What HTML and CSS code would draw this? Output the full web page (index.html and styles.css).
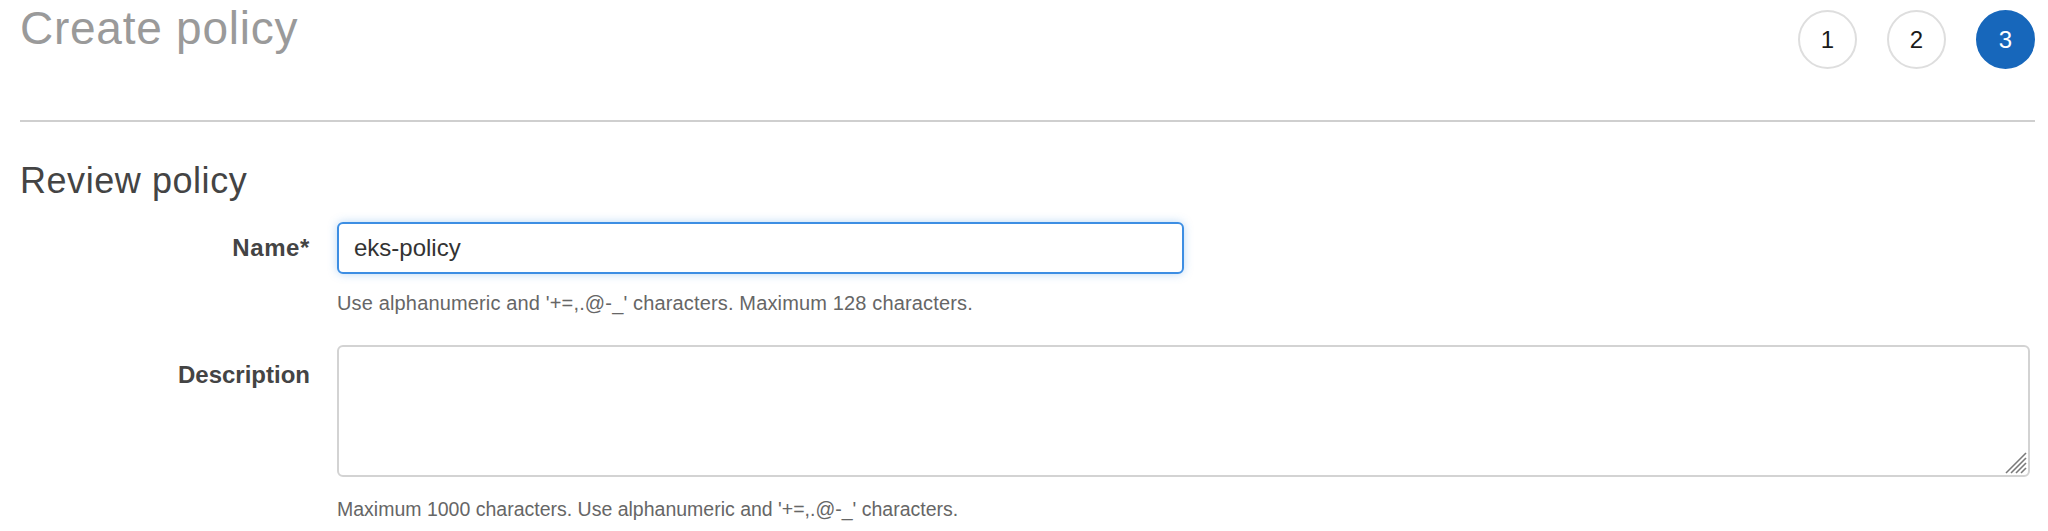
FILE: index.html
```html
<!DOCTYPE html>
<html lang="en">
<head>
<meta charset="utf-8">
<title>Create policy</title>
<link rel="stylesheet" href="styles.css">
</head>
<body>
<div class="page">
  <header class="header">
    <h1 class="title">Create policy</h1>
    <ol class="steps">
      <li class="step">1</li>
      <li class="step">2</li>
      <li class="step step-active">3</li>
    </ol>
  </header>

  <h2 class="section-title">Review policy</h2>

  <div class="form-row">
    <label class="label label-name" for="name">Name*</label>
    <div class="field">
      <input id="name" class="input input-focused" type="text" value="eks-policy">
      <div class="hint">Use alphanumeric and '+=,.@-_' characters. Maximum 128 characters.</div>
    </div>
  </div>

  <div class="form-row form-row-desc">
    <label class="label label-desc" for="desc">Description</label>
    <div class="field field-wide">
      <div class="textarea-wrap">
        <textarea id="desc" class="textarea"></textarea>
        <svg class="grip" width="22" height="22" viewBox="0 0 22 22" aria-hidden="true">
          <line x1="1" y1="21" x2="21" y2="1"/>
          <line x1="6" y1="21" x2="21" y2="6"/>
          <line x1="11" y1="21" x2="21" y2="11"/>
          <line x1="16" y1="21" x2="21" y2="16"/>
        </svg>
      </div>
      <div class="hint hint-desc">Maximum 1000 characters. Use alphanumeric and '+=,.@-_' characters.</div>
    </div>
  </div>
</div>
</body>
</html>
```

FILE: styles.css
```css
* { box-sizing: border-box; }

html, body {
  margin: 0;
  padding: 0;
  background: #ffffff;
}

body {
  font-family: "Liberation Sans", Arial, Helvetica, sans-serif;
  color: #333;
}

.page {
  padding: 0 13px 0 20px;
}

.header {
  display: flex;
  justify-content: space-between;
  align-items: flex-start;
  height: 122px;
  border-bottom: 2px solid #cfcfcf;
}

.title {
  margin: 3px 0 0 0;
  font-size: 46px;
  line-height: 50px;
  font-weight: normal;
  color: #9a9a9a;
  letter-spacing: 0.75px;
}

.steps {
  list-style: none;
  margin: 10px 0 0 0;
  padding: 0;
  display: flex;
  gap: 30px;
}

.step {
  width: 59px;
  height: 59px;
  border-radius: 50%;
  border: 2px solid #dedede;
  display: flex;
  align-items: center;
  justify-content: center;
  font-size: 24px;
  color: #1a1a1a;
  background: #fff;
}

.step-active {
  background: #1767bb;
  border-color: #1767bb;
  color: #ffffff;
}

.section-title {
  margin: 38px 0 0 0;
  font-size: 36px;
  line-height: 42px;
  font-weight: normal;
  color: #444;
  letter-spacing: 0.55px;
}

.form-row {
  display: flex;
  margin-top: 20px;
  padding-right: 5px;
}

.form-row-desc {
  margin-top: 30px;
}

.label {
  flex: none;
  width: 290px;
  text-align: right;
  font-size: 24px;
  line-height: 28px;
  font-weight: bold;
  color: #444;
}

.label-name {
  padding-top: 12px;
  letter-spacing: 0.6px;
}

.label-desc { padding-top: 16px; }

.field {
  margin-left: 27px;
  display: flex;
  flex-direction: column;
}

.field-wide {
  flex: 1;
}

.input {
  width: 847px;
  height: 52px;
  padding: 0 15px;
  font-family: inherit;
  font-size: 24px;
  color: #333;
  border: 2px solid #ccc;
  border-radius: 6px;
  background: #fff;
  outline: none;
}

.input-focused {
  border-color: #3d8ee3;
  box-shadow: 0 0 10px rgba(61, 142, 227, 0.35);
}

.textarea-wrap {
  position: relative;
  width: 100%;
}

.textarea {
  display: block;
  width: 100%;
  height: 132px;
  border: 2px solid #d3d3d3;
  border-radius: 6px;
  resize: none;
  outline: none;
  font-family: inherit;
  font-size: 24px;
  background: #fff;
}

.grip {
  position: absolute;
  right: 3px;
  bottom: 3px;
  stroke: #7a7a7a;
  stroke-width: 1.6;
}

.hint {
  margin-top: 17px;
  font-size: 20px;
  line-height: 24px;
  color: #666;
  letter-spacing: 0.15px;
}

.hint-desc {
  margin-top: 20px;
  font-size: 19.5px;
  letter-spacing: 0;
}
```
